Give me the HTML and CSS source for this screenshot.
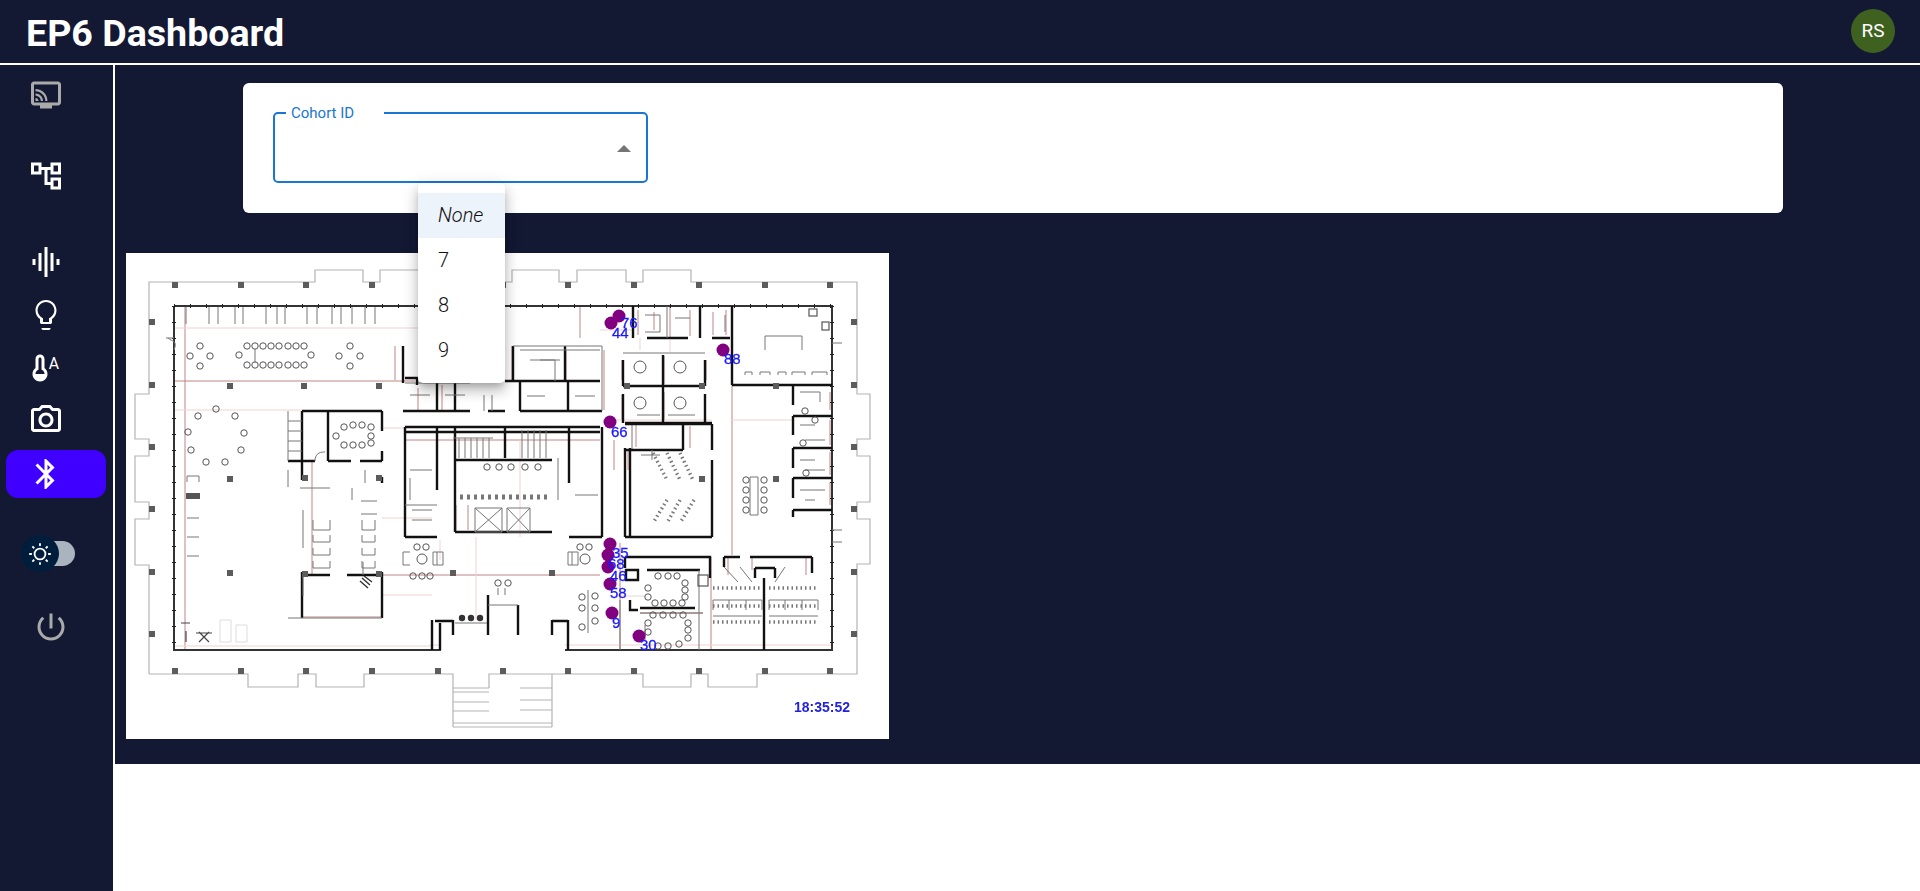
FILE: index.html
```html
<!DOCTYPE html>
<html lang="en">
<head>
    <meta charset="UTF-8">
    <meta name="viewport" content="width=device-width, initial-scale=1.0">
    <title>EP6 Dashboard</title>
    <link rel="stylesheet" href="styles.css">
</head>
<body>
    <header class="top-bar">
        <h1 class="top-title">EP6 Dashboard</h1>
        <div class="avatar">RS</div>
    </header>

    <div class="layout">
        <!-- Side navigation -->
        <nav class="side-nav">
            <div class="nav-item nav-tv">
                <svg class="nav-icon" viewBox="0 0 24 24"><path d="M20 3H4c-1.1 0-2 .9-2 2v12c0 1.1.9 2 2 2h4v2h8v-2h4c1.1 0 2-.9 2-2V5c0-1.1-.9-2-2-2zm0 14H4V5h16v12zM5 14v2h2c0-1.11-.89-2-2-2zm0-3v1.43c1.97 0 3.57 1.6 3.57 3.57H10c0-2.76-2.24-5-5-5zm0-3v1.45c3.61 0 6.55 2.93 6.55 6.55H13c0-4.42-3.59-8-8-8z"/></svg>
            </div>
            <div class="nav-item nav-tree">
                <svg class="nav-icon" viewBox="0 0 24 24"><path d="M22 11V3h-7v3H9V3H2v8h7V8h2v10h4v3h7v-8h-7v3h-2V8h2v3h7zM7 9H4V5h3v4zm10 6h3v4h-3v-4zm0-10h3v4h-3V5z"/></svg>
            </div>
            <div class="nav-item nav-eq">
                <svg class="nav-icon" viewBox="0 0 24 24"><path d="M7 18h2V6H7v12zm4 4h2V2h-2v20zm-8-8h2v-4H3v4zm12 4h2V6h-2v12zm4-8v4h2v-4h-2z"/></svg>
            </div>
            <div class="nav-item nav-small-gap">
                <svg class="nav-icon" viewBox="0 0 24 24"><path d="M9 21c0 .5.4 1 1 1h4c.6 0 1-.5 1-1v-.4H9v.4zm3-19C8.1 2 5 5.1 5 9c0 2.4 1.2 4.5 3 5.7V17c0 .5.4 1 1 1h6c.6 0 1-.5 1-1v-2.3c1.8-1.2 3-3.3 3-5.7 0-3.9-3.1-7-7-7zm2.9 11.6-.9.6v2.4h-4v-2.4l-.9-.6C7.8 12.7 6.4 11 6.4 9c0-3.1 2.5-5.6 5.6-5.6s5.6 2.5 5.6 5.6c0 2-1.4 3.7-2.7 4.6z"/></svg>
            </div>
            <div class="nav-item nav-small-gap">
                <svg class="nav-icon nav-icon-wide" viewBox="0 0 32 24"><path d="M11 12V6c0-1.66-1.34-3-3-3S5 4.34 5 6v6c-1.21.91-2 2.37-2 4 0 1.12.38 2.14 1 2.97V19h.02c.91 1.21 2.35 2 3.98 2s3.06-.79 3.98-2H12v-.03c.62-.83 1-1.85 1-2.97 0-1.63-.79-3.09-2-4zm-6 4c0-.8.31-1.55.87-2.12L7 13V6c0-.55.45-1 1-1s1 .45 1 1v7l1.13.88c.56.57.87 1.32.87 2.12H5z"/><text class="nav-icon-letter" x="13.8" y="12.4">A</text></svg>
            </div>
            <div class="nav-item nav-camera">
                <svg class="nav-icon" viewBox="0 0 24 24"><path d="M20 4h-3.17L15 2H9L7.17 4H4c-1.1 0-2 .9-2 2v12c0 1.1.9 2 2 2h16c1.1 0 2-.9 2-2V6c0-1.1-.9-2-2-2zm0 14H4V6h4.05l1.83-2h4.24l1.83 2H20v12zM12 7c-2.76 0-5 2.24-5 5s2.24 5 5 5 5-2.24 5-5-2.24-5-5-5zm0 8c-1.65 0-3-1.35-3-3s1.35-3 3-3 3 1.35 3 3-1.35 3-3 3z"/></svg>
            </div>
            <div class="nav-item nav-active">
                <svg class="nav-icon" viewBox="0 0 24 24"><path d="M17.71 7.71 12 2h-1v7.59L6.41 5 5 6.41 10.59 12 5 17.59 6.41 19 11 14.41V22h1l5.71-5.71-4.3-4.29 4.3-4.29zM13 5.83l1.88 1.88L13 9.59V5.83zm1.88 10.46L13 18.17v-3.76l1.88 1.88z"/></svg>
            </div>
            <div class="theme-switch">
                <div class="theme-track"></div>
                <div class="theme-thumb">
                    <svg class="theme-sun" viewBox="0 0 20 20"><path d="M9.305 1.667V3.75h1.389V1.667h-1.39zm-4.707 1.95l-.982.982L5.09 6.072l.982-.982-1.473-1.473zm10.802 0L13.927 5.09l.982.982 1.473-1.473-.982-.982zM10 5.139a4.872 4.872 0 00-4.862 4.86A4.872 4.872 0 0010 14.862 4.872 4.872 0 0014.86 10 4.872 4.872 0 0010 5.139zm0 1.389A3.462 3.462 0 0113.471 10a3.462 3.462 0 01-3.473 3.472A3.462 3.462 0 016.527 10 3.462 3.462 0 0110 6.528zM1.665 9.305v1.39h2.083v-1.39H1.666zm14.583 0v1.39h2.084v-1.39h-2.084zM5.09 13.928L3.616 15.4l.982.982 1.473-1.473-.982-.982zm9.82 0l-.982.982 1.473 1.473.982-.982-1.473-1.473zM9.305 16.25v2.083h1.389V16.25h-1.39z"/></svg>
                </div>
            </div>
            <div class="nav-item nav-power">
                <svg class="nav-icon" viewBox="0 0 24 24"><path d="M13 3h-2v10h2V3zm4.83 2.17-1.42 1.42C17.99 7.86 19 9.81 19 12c0 3.87-3.13 7-7 7s-7-3.13-7-7c0-2.19 1.01-4.14 2.58-5.42L6.17 5.17C4.23 6.82 3 9.26 3 12c0 4.97 4.03 9 9 9s9-4.03 9-9c0-2.74-1.23-5.18-3.17-6.83z"/></svg>
            </div>
        </nav>

        <main class="content">
            <!-- Cohort filter -->
            <section class="filter-card">
                <div class="cohort-select">
                    <span class="cohort-label">Cohort ID</span>
                    <span class="cohort-arrow"></span>
                </div>
                <ul class="cohort-menu">
                    <li class="cohort-option cohort-option-none">None</li>
                    <li class="cohort-option">7</li>
                    <li class="cohort-option">8</li>
                    <li class="cohort-option">9</li>
                </ul>
            </section>

            <!-- Floor plan, drawn in page coordinates so it is easy to compare -->
            <svg class="floor-plan" viewBox="126 253 763 486">
                <!-- outer facade -->
                <path class="fp-facade" d="M149 674V565H135V519H149V502H135V456H149V439H135V394H149V282H315V270H363V282H380V270H428V282H446V270H494V282H512V270H559V282H577V270H626V282H643V270H691V282H857V394H870V439H857V456H870V502H857V519H870V564H857V674H757V687H708V674H691V687H643V674H552V727M149 674H248V687H298V674H316V687H364V674H453V727M489 688V674H552"/>
                <path class="fp-facade" d="M453 688H489M453 692H489M453 702H489M453 711H489M520 688H552M520 700H552M520 710H552M453 723H552M453 727H552"/>

                <!-- red dimension lines -->
                <path class="fp-red" d="M185 306V650M174 381H415M312 461V575M382 575H600M732 385V555M711 557V650M640 613H703M620 543V650M302 617H382M670 306V338M405 440H600M580 306V338"/>
                <path class="fp-red" d="M395 346V380M418 388V410M442 385V411M512 346V380M566 350V380M604 350V410M638 310V335M654 312V330M690 310V336M713 312V335M726 310V335M664 356V384M664 392V420M622 360V380M622 395V420M706 360V380M830 392V410M830 420V445M830 452V475M830 482V505M628 450V470M636 425V447M690 426V448M614 440V470M728 557V575M806 557V575M752 557V570M468 505V530M456 505V532"/>
                <path class="fp-red-light" d="M174 328H500M174 410H302M382 428H405M382 518H432M174 646H432M612 420H712M732 420H793M600 330H632M476 537V620M440 540V560M520 440V537M670 340V352M640 338V350M565 645H832M440 645H430M382 595H432M615 596H645"/>

                <!-- building shell -->
                <path class="fp-wall-mid" d="M174 306H832V650H565M174 306V650H441"/>
                <path class="fp-ticks" d="M174 306H832M174 306V650M832 306V650"/>

                <!-- window bays along the north wall -->
                <path class="fp-line" d="M186 307V324M209 307V324M218 307V324M235 307V324M243 307V324M266 307V324M277 307V324M285 307V324M307 307V324M317 307V324M332 307V324M341 307V324M352 307V324M365 307V324M375 307V324"/>

                <!-- west meeting room and offices -->
                <path class="fp-wall" d="M302 411V480M328 411V461M382 411V431M382 451V461M302 411H382M288 461H315M328 461H351M360 461H382M382 477V483M302 572V618M382 572V618M302 575H330M347 575H382"/>
                <path class="fp-line" d="M288 618H382M288 411V461M288 421H302M288 431H302M288 441H302M288 451H302M303 510V548M303 572V596M315 461C315 452 322 452 325 452M288 470V487M365 470V483M300 488H330M313 520V530H330V520M313 535V542H330V535M313 548V555H330V548M313 561V568H330V561M362 520V530H375V520M362 535V542H375V535M362 548V555H375V548M362 561V568H375V561M361 501H377M361 514H377M352 488V500M363 562V575"/>
                <path class="fp-thick-thin" d="M360 581L368 588M362 578L370 585M364 576L372 582"/>

                <!-- north corridor rooms -->
                <path class="fp-wall" d="M403 346V383M513 346V381M565 346V381M403 411H470M437 383V411M455 383V411M505 381H600M520 411H602M568 381V411M520 381V411M488 411H505"/>
                <path class="fp-line" d="M405 383H470M513 346H602M602 346V411M520 350H600M540 360H560M527 396H545M575 396H595M410 395H430M445 395H465M484 395V411M492 395V411M530 360H555V381"/>

                <!-- stairs, core and toilets -->
                <path class="fp-wall" d="M405 427V537M437 428V490M455 428V532M405 427H600M405 432H600M455 532H552M455 460H552M505 427V458M569 428V483M602 427V537M569 537H602M405 537H437"/>
                <path class="fp-line" d="M405 505H437M459 438V458M465 438V458M471 438V458M477 438V458M483 438V458M489 438V458M453 438H493M522 430V458M528 430V458M534 430V458M540 430V458M546 430V458M475 508H502V532H475ZM475 508L502 532M502 508L475 532M507 508H530V532H507ZM507 508L530 532M530 508L507 532M410 470H432M410 478V500M558 458V500M575 495H598M412 510H432M412 520H432"/>
                <path class="fp-dots" d="M460 497H550"/>
                <circle class="fp-chair" cx="487" cy="467"/><circle class="fp-chair" cx="499" cy="467"/><circle class="fp-chair" cx="511" cy="467"/><circle class="fp-chair" cx="525" cy="467"/><circle class="fp-chair" cx="538" cy="467"/>

                <!-- small meeting rooms -->
                <path class="fp-wall" d="M623 386H705M625 423H712M663 355V423M705 360V386M623 360V386M623 394V423M705 394V423"/>
                <path class="fp-line" d="M623 353H705M637 415H660M668 415H695M632 424V450"/>
                <circle class="fp-chair fp-table" cx="640" cy="367"/><circle class="fp-chair fp-table" cx="680" cy="367"/><circle class="fp-chair fp-table" cx="640" cy="403"/><circle class="fp-chair fp-table" cx="680" cy="403"/>

                <!-- north east offices -->
                <path class="fp-wall" d="M633 306V338M700 306V338M732 306V385M647 338H688M712 338H730M732 385H832"/>
                <path class="fp-line" d="M667 306V338M645 315H660V332H645M675 318H690M725 315V332M765 336H802M765 336V350M802 336V350M832 343H842M745 375V372H752V375M760 375V372H770V375M778 375V372H786V375M792 375V372H805V375M812 375V372H827V375"/>
                <rect class="fp-box" x="809" y="309" width="8" height="7"/><rect class="fp-box" x="822" y="322" width="7" height="8"/>

                <!-- east toilets -->
                <path class="fp-wall" d="M793 385V405M793 416V435M793 448V468M793 478V498M793 510V517M793 416H832M793 448H832M793 478H832M793 510H832"/>
                <path class="fp-line" d="M800 392H820V402M800 425H815M805 440H825M800 460H815M805 470H825M800 490H825M805 500H815M832 530H842"/>
                <circle class="fp-chair" cx="805" cy="411"/><circle class="fp-chair" cx="803" cy="443"/><circle class="fp-chair" cx="806" cy="473"/><circle class="fp-chair" cx="815" cy="420"/>

                <!-- classroom in the middle -->
                <path class="fp-wall" d="M625 448V537M630 448V537M625 424H712M712 460V537M625 537H712M625 450H683M683 424V450M712 424V450"/>
                <path class="fp-dashed" d="M653 453L667 480M667 453L680 480M680 453L693 480M667 500L653 523M680 500L667 523M694 500L680 523"/>
                <path class="fp-line" d="M641 455H660M652 450V460M750 477H758V515H750Z"/>
                <circle class="fp-chair" cx="746" cy="480"/><circle class="fp-chair" cx="746" cy="490"/><circle class="fp-chair" cx="746" cy="500"/><circle class="fp-chair" cx="746" cy="510"/><circle class="fp-chair" cx="764" cy="480"/><circle class="fp-chair" cx="764" cy="490"/><circle class="fp-chair" cx="764" cy="500"/><circle class="fp-chair" cx="764" cy="510"/>

                <!-- south meeting rooms -->
                <path class="fp-wall" d="M625 557H710V578M647 570H700M625 557V568M626 570H638V580H626ZM630 600V610H638M640 608H695"/>
                <path class="fp-line" d="M699 570V650M620 600V650M640 613H703M645 625V640"/>
                <circle class="fp-chair" cx="658" cy="576"/><circle class="fp-chair" cx="668" cy="576"/><circle class="fp-chair" cx="677" cy="576"/><circle class="fp-chair" cx="648" cy="588"/><circle class="fp-chair" cx="648" cy="597"/><circle class="fp-chair" cx="685" cy="583"/><circle class="fp-chair" cx="685" cy="590"/><circle class="fp-chair" cx="685" cy="597"/><circle class="fp-chair" cx="655" cy="603"/><circle class="fp-chair" cx="664" cy="603"/><circle class="fp-chair" cx="673" cy="603"/><circle class="fp-chair" cx="682" cy="603"/><circle class="fp-chair" cx="653" cy="615"/><circle class="fp-chair" cx="663" cy="615"/><circle class="fp-chair" cx="673" cy="615"/><circle class="fp-chair" cx="683" cy="615"/><circle class="fp-chair" cx="648" cy="623"/><circle class="fp-chair" cx="648" cy="632"/><circle class="fp-chair" cx="688" cy="623"/><circle class="fp-chair" cx="688" cy="630"/><circle class="fp-chair" cx="688" cy="638"/><circle class="fp-chair" cx="658" cy="646"/><circle class="fp-chair" cx="668" cy="646"/><circle class="fp-chair" cx="679" cy="644"/>

                <!-- south east classrooms -->
                <path class="fp-wall" d="M724 557H740M750 557H812M724 557V567M812 557V573M755 568H775M755 568V578M775 568V578M764 578V650"/>
                <path class="fp-line" d="M713 600H762M713 616H762M769 600H818M769 616H818M713 600V610M729 600V610M746 600V610M762 600V610M769 600V610M785 600V610M802 600V610M818 600V610M724 567L738 582M740 567L752 582M785 567L775 582"/>
                <path class="fp-dashed" d="M713 588H762M769 588H818M713 606H762M769 606H818M713 622H762M769 622H818"/>
                <rect class="fp-box" x="698" y="575" width="10" height="11"/>
                <path class="fp-line" d="M832 542H842"/>

                <!-- lobby seating -->
                <path class="fp-wall" d="M488 595V635M518 605V635M453 620V635M435 621H453M432 620V650M440 623V650M552 620V635M568 620V650M552 621H568"/>
                <path class="fp-line" d="M488 605H518M455 623H487M588 590V633M403 552V565H410M403 552H410M433 552H443V565H433ZM437 552V565M568 552H578V565H568ZM572 552V565M498 588V595M505 588V595"/>
                <circle class="fp-chair" cx="417" cy="547"/><circle class="fp-chair" cx="426" cy="547"/><circle class="fp-chair fp-round" cx="422" cy="559"/><circle class="fp-chair" cx="413" cy="576"/><circle class="fp-chair" cx="422" cy="576"/><circle class="fp-chair" cx="430" cy="576"/><circle class="fp-chair" cx="580" cy="547"/><circle class="fp-chair" cx="589" cy="547"/><circle class="fp-chair fp-round" cx="585" cy="559"/><circle class="fp-chair" cx="582" cy="597"/><circle class="fp-chair" cx="582" cy="608"/><circle class="fp-chair" cx="582" cy="627"/><circle class="fp-chair" cx="595" cy="596"/><circle class="fp-chair" cx="595" cy="608"/><circle class="fp-chair" cx="595" cy="621"/><circle class="fp-chair" cx="498" cy="583"/><circle class="fp-chair" cx="508" cy="583"/>
                <circle class="fp-tree" cx="462" cy="618"/><circle class="fp-tree" cx="471" cy="618"/><circle class="fp-tree" cx="480" cy="618"/>

                <!-- west open plan seating -->
                <circle class="fp-chair" cx="200" cy="346"/><circle class="fp-chair" cx="190" cy="356"/><circle class="fp-chair" cx="210" cy="356"/><circle class="fp-chair" cx="200" cy="366"/>
                <circle class="fp-chair" cx="247" cy="346"/><circle class="fp-chair" cx="255" cy="346"/><circle class="fp-chair" cx="263" cy="346"/><circle class="fp-chair" cx="271" cy="346"/><circle class="fp-chair" cx="279" cy="346"/><circle class="fp-chair" cx="288" cy="346"/><circle class="fp-chair" cx="296" cy="346"/><circle class="fp-chair" cx="304" cy="346"/>
                <circle class="fp-chair" cx="247" cy="365"/><circle class="fp-chair" cx="255" cy="365"/><circle class="fp-chair" cx="263" cy="365"/><circle class="fp-chair" cx="271" cy="365"/><circle class="fp-chair" cx="279" cy="365"/><circle class="fp-chair" cx="288" cy="365"/><circle class="fp-chair" cx="296" cy="365"/><circle class="fp-chair" cx="304" cy="365"/>
                <circle class="fp-chair" cx="239" cy="355"/><circle class="fp-chair" cx="311" cy="355"/>
                <circle class="fp-chair" cx="350" cy="346"/><circle class="fp-chair" cx="339" cy="356"/><circle class="fp-chair" cx="360" cy="356"/><circle class="fp-chair" cx="350" cy="366"/>
                <circle class="fp-chair" cx="216" cy="409"/><circle class="fp-chair" cx="198" cy="416"/><circle class="fp-chair" cx="235" cy="416"/><circle class="fp-chair" cx="188" cy="432"/><circle class="fp-chair" cx="244" cy="433"/><circle class="fp-chair" cx="191" cy="450"/><circle class="fp-chair" cx="241" cy="450"/><circle class="fp-chair" cx="206" cy="462"/><circle class="fp-chair" cx="225" cy="462"/>
                <!-- conference table chairs -->
                <circle class="fp-chair" cx="344" cy="427"/><circle class="fp-chair" cx="353" cy="425"/><circle class="fp-chair" cx="362" cy="425"/><circle class="fp-chair" cx="371" cy="427"/><circle class="fp-chair" cx="344" cy="445"/><circle class="fp-chair" cx="353" cy="445"/><circle class="fp-chair" cx="362" cy="445"/><circle class="fp-chair" cx="371" cy="443"/><circle class="fp-chair" cx="336" cy="436"/><circle class="fp-chair" cx="371" cy="436"/>
                <path class="fp-line" d="M255 349V363M187 476H199V482M187 476V482M168 338C172 342 178 340 174 350M174 338H166M187 518H199M187 537H199M187 556H199"/>
                <rect class="fp-desk" x="186" y="493" width="14" height="6"/>
                <path class="fp-dark-line" d="M186 631V642M181 623H190M199 632L209 642M209 632L199 642M196 633H212"/>
                <path class="fp-faint" d="M220 620V642H231V620ZM236 625V642H247V625Z"/>
                <path class="fp-wall" d="M405 378H419M417 378V385"/>

                <!-- building columns -->
                <path class="fp-columns" d="M175 285h.01M241 285h.01M306 285h.01M372 285h.01M438 285h.01M503 285h.01M568 285h.01M634 285h.01M699 285h.01M765 285h.01M830 285h.01M175 671h.01M241 671h.01M306 671h.01M372 671h.01M438 671h.01M503 671h.01M568 671h.01M634 671h.01M699 671h.01M765 671h.01M830 671h.01M152 322h.01M152 385h.01M152 447h.01M152 509h.01M152 572h.01M152 634h.01M854 322h.01M854 385h.01M854 447h.01M854 509h.01M854 572h.01M854 634h.01M230 386h.01M304 386h.01M379 386h.01M230 479h.01M230 573h.01M453 573h.01M552 573h.01M627 386h.01M702 386h.01M776 386h.01M702 479h.01M776 479h.01M305 478h.01M379 478h.01M305 574h.01M379 574h.01"/>

                <!-- cohort devices -->
                <circle class="fp-device" cx="619" cy="316"/><circle class="fp-device" cx="611" cy="323"/><circle class="fp-device" cx="723" cy="350"/><circle class="fp-device" cx="610" cy="422"/><circle class="fp-device" cx="610" cy="544"/><circle class="fp-device" cx="608" cy="555"/><circle class="fp-device" cx="608" cy="567"/><circle class="fp-device" cx="610" cy="584"/><circle class="fp-device" cx="612" cy="613"/><circle class="fp-device" cx="639" cy="636"/>
                <text class="fp-label" x="621" y="328">76</text>
                <text class="fp-label" x="612" y="338">44</text>
                <text class="fp-label" x="724" y="364">88</text>
                <text class="fp-label" x="611" y="437">66</text>
                <text class="fp-label" x="612" y="558">35</text>
                <text class="fp-label" x="608" y="569">68</text>
                <text class="fp-label" x="610" y="581">46</text>
                <text class="fp-label" x="610" y="598">58</text>
                <text class="fp-label" x="612" y="628">9</text>
                <text class="fp-label" x="640" y="650">30</text>
                <text class="fp-clock" x="794" y="712">18:35:52</text>
            </svg>
        </main>
    </div>
</body>
</html>
```

FILE: styles.css
```css
* {
    box-sizing: border-box;
}

html, body {
    height: 100%;
}

body {
    margin: 0;
    display: flex;
    flex-direction: column;
    background-color: #fff;
    font-family: Roboto, "Liberation Sans", sans-serif;
    overflow: hidden;
}

/* Top bar */
.top-bar {
    flex: none;
    height: 65px;
    padding: 0 25px 2px 26px;
    display: flex;
    align-items: center;
    justify-content: space-between;
    background-color: #131833;
    border-bottom: 2px solid #fff;
}

.top-title {
    margin: 4px 0 0;
    font-size: 37.6px;
    font-weight: 700;
    color: #fff;
}

.avatar {
    width: 44px;
    height: 44px;
    border-radius: 50%;
    display: flex;
    align-items: center;
    justify-content: center;
    background-color: #3f6120;
    color: #fff;
    font-size: 19px;
}

.layout {
    flex: 1;
    display: flex;
    min-height: 0;
}

/* Side navigation */
.side-nav {
    flex: none;
    width: 115px;
    padding-top: 12px;
    background-color: #131833;
    border-right: 2px solid #fff;
}

.nav-item {
    height: 36px;
    padding-left: 28px;
    color: #fff;
}

.nav-icon {
    display: block;
    width: 36px;
    height: 36px;
    fill: currentColor;
}

.nav-icon-wide {
    width: 48px;
}

.nav-icon-letter {
    font-family: Roboto, sans-serif;
    font-size: 10.5px;
    fill: #fff;
}

.nav-tv {
    color: #aaa;
}

.nav-tree {
    margin-top: 45px;
}

.nav-eq {
    margin-top: 50px;
}

.nav-small-gap {
    margin-top: 17px;
}

.nav-camera {
    margin-top: 16px;
}

.nav-active {
    width: 100px;
    height: 48px;
    margin: 12px 0 0 6px;
    padding: 6px 0 0 22px;
    border-radius: 12px;
    background-color: #3f00ff;
}

.theme-switch {
    position: relative;
    width: 54px;
    height: 37px;
    margin: 37px 0 0 21px;
}

.theme-track {
    position: absolute;
    left: 14px;
    right: 0;
    top: 6px;
    height: 25px;
    border-radius: 13px;
    background-color: #aab4be;
}

.theme-thumb {
    position: absolute;
    left: 0;
    top: 0;
    width: 38px;
    height: 37px;
    border-radius: 50%;
    display: flex;
    align-items: center;
    justify-content: center;
    background-color: #001e3c;
}

.theme-sun {
    width: 26px;
    height: 26px;
    fill: #fff;
}

.nav-power {
    margin-top: 37px;
    padding-left: 33px;
    color: #aaa;
}

/* Main content */
.content {
    flex: 1;
    align-self: flex-start;
    padding: 18px 137px 25px 11px;
    background-color: #131833;
}

.filter-card {
    position: relative;
    height: 130px;
    margin-left: 117px;
    padding: 29px 30px;
    border-radius: 6px;
    background-color: #fff;
}

.cohort-select {
    position: relative;
    width: 375px;
    height: 71px;
    border: 2px solid #1976d2;
    border-radius: 5px;
}

.cohort-label {
    position: absolute;
    left: 11px;
    top: -10px;
    width: 98px;
    padding-left: 5px;
    background-color: #fff;
    color: #1976d2;
    font-size: 15px;
    line-height: 18px;
}

.cohort-arrow {
    position: absolute;
    right: 15px;
    top: 31px;
    border-left: 7px solid transparent;
    border-right: 7px solid transparent;
    border-bottom: 7px solid #757575;
}

.cohort-menu {
    position: absolute;
    left: 175px;
    top: 100px;
    width: 87px;
    margin: 0;
    padding: 10px 0;
    list-style: none;
    border-radius: 5px;
    background-color: #fff;
    box-shadow: 0 5px 6px -3px rgba(0, 0, 0, 0.2), 0 9px 12px 1px rgba(0, 0, 0, 0.14), 0 3px 16px 2px rgba(0, 0, 0, 0.12);
    z-index: 2;
}

.cohort-option {
    height: 45px;
    padding-left: 20px;
    line-height: 45px;
    font-size: 20px;
    font-weight: 300;
    color: #111;
}

.cohort-option-none {
    background-color: #edf3fb;
    font-style: italic;
}

/* Floor plan */
.floor-plan {
    display: block;
    width: 763px;
    height: 486px;
    margin-top: 40px;
    background-color: #fff;
    filter: blur(0.55px);
}

.floor-plan path,
.floor-plan circle,
.floor-plan rect {
    fill: none;
}

.floor-plan .fp-facade {
    stroke: #b4b4b4;
    stroke-width: 1.2;
}

.floor-plan .fp-red {
    stroke: #c08484;
    stroke-width: 1;
}

.floor-plan .fp-red-light {
    stroke: #f1d3d3;
    stroke-width: 1;
}

.floor-plan .fp-wall-mid {
    stroke: #333;
    stroke-width: 2;
}

.floor-plan .fp-ticks {
    stroke: #222;
    stroke-width: 4;
    stroke-dasharray: 1 15;
}

.floor-plan .fp-wall {
    stroke: #111;
    stroke-width: 2.4;
}

.floor-plan .fp-line {
    stroke: #777;
    stroke-width: 1;
}

.floor-plan .fp-thick-thin {
    stroke: #333;
    stroke-width: 1.4;
}

.floor-plan .fp-dots {
    stroke: #777;
    stroke-width: 5;
    stroke-dasharray: 3 4;
}

.floor-plan .fp-dashed {
    stroke: #777;
    stroke-width: 3.5;
    stroke-dasharray: 1.5 3;
}

.floor-plan .fp-chair {
    r: 3.2px;
    stroke: #555;
    stroke-width: 1;
}

.floor-plan .fp-table {
    r: 6px;
}

.floor-plan .fp-round {
    r: 5px;
}

.floor-plan .fp-box {
    stroke: #555;
    stroke-width: 1.2;
}

.floor-plan .fp-desk {
    fill: #555;
}

.floor-plan .fp-dark-line {
    stroke: #444;
    stroke-width: 1.2;
}

.floor-plan .fp-faint {
    stroke: #ddd;
    stroke-width: 1;
}

.floor-plan .fp-tree {
    r: 3.2px;
    fill: #333;
}

.floor-plan .fp-columns {
    stroke: #5c5c5c;
    stroke-width: 6;
    stroke-linecap: square;
}

.floor-plan .fp-device {
    r: 6.5px;
    fill: #800080;
}

.fp-label {
    font-family: "Liberation Sans", sans-serif;
    font-size: 15px;
    fill: #1a1aff;
    stroke: #1a1aff;
    stroke-width: 0.3;
}

.fp-clock {
    font-family: "Liberation Sans", sans-serif;
    font-size: 14px;
    font-weight: 700;
    fill: #2222dd;
}
```
